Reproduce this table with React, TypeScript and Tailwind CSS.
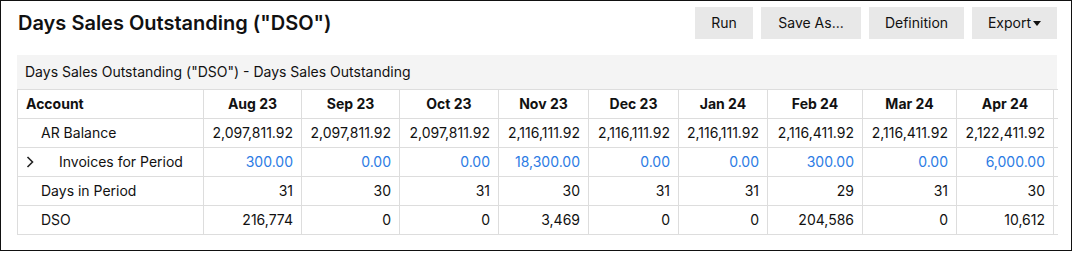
const months = ["Aug 23", "Sep 23", "Oct 23", "Nov 23", "Dec 23", "Jan 24", "Feb 24", "Mar 24", "Apr 24"];
const widths = [98, 98, 99, 90, 90, 89, 95, 94, 97];

const rows = [
  {
    name: "AR Balance",
    values: ["2,097,811.92", "2,097,811.92", "2,097,811.92", "2,116,111.92", "2,116,111.92", "2,116,111.92", "2,116,411.92", "2,116,411.92", "2,122,411.92"],
  },
  {
    name: "Invoices for Period",
    expandable: true,
    values: ["300.00", "0.00", "0.00", "18,300.00", "0.00", "0.00", "300.00", "0.00", "6,000.00"],
  },
  {
    name: "Days in Period",
    values: ["31", "30", "31", "30", "31", "31", "29", "31", "30"],
  },
  {
    name: "DSO",
    values: ["216,774", "0", "0", "3,469", "0", "0", "204,586", "0", "10,612"],
  },
];

const App = () => {
  return (
    <div
      className="w-[1072px] h-[251px] border border-[#111] bg-white text-[#111] pl-4 pt-[6px]"
      style={{ fontFamily: "Inter, 'Noto Sans', sans-serif" }}
    >
      <div className="flex w-[1040px] items-start justify-between">
        <h1 className="pt-[1px] pl-[1px] text-[20px] leading-[30px] font-semibold">Days Sales Outstanding ("DSO")</h1>
        <div className="flex gap-2">
          <button className="h-8 w-[58px] bg-[#e8e8e8] text-sm">Run</button>
          <button className="h-8 w-[100px] bg-[#e8e8e8] text-sm">Save As...</button>
          <button className="h-8 w-[95px] bg-[#e8e8e8] text-sm">Definition</button>
          <button className="h-8 w-[85px] bg-[#e8e8e8] text-sm flex items-center justify-center">
            Export
            <svg width="8" height="5" viewBox="0 0 8 5" className="ml-[2px] mt-[1px]">
              <path d="M0 0 L8 0 L4 5 Z" fill="#111" />
            </svg>
          </button>
        </div>
      </div>

      {/* report panel */}
      <div className="mt-4 w-[1040px]">
        <div className="h-[34px] bg-[#f4f4f4] flex items-center px-2 text-sm">
          Days Sales Outstanding ("DSO") - Days Sales Outstanding
        </div>
        <table className="table-fixed border-collapse text-sm w-[1040px]">
          <colgroup>
            <col style={{ width: 186 }} />
            {widths.map((w, i) => (
              <col key={i} style={{ width: w }} />
            ))}
            <col style={{ width: 4 }} />
          </colgroup>
          <thead>
            <tr className="h-[29px]">
              <th className="border border-[#dddddd] px-2 text-left font-bold">Account</th>
              {months.map((m) => (
                <th key={m} className="border border-[#dddddd] px-2 text-center font-bold">
                  {m}
                </th>
              ))}
              <th className="border-y border-[#dddddd]"></th>
            </tr>
          </thead>
          <tbody>
            {rows.map((row) => (
              <tr key={row.name} className="h-[29px]">
                <td className="border border-[#dddddd] px-2 whitespace-nowrap">
                  {row.expandable ? (
                    <span className="flex items-center">
                      <svg width="8" height="12" viewBox="0 0 8 12" className="mr-[25px]">
                        <path d="M1.5 1 L6.5 6 L1.5 11" fill="none" stroke="#222" strokeWidth="1.6" />
                      </svg>
                      {row.name}
                    </span>
                  ) : (
                    <span className="pl-[15px]">{row.name}</span>
                  )}
                </td>
                {row.values.map((v, i) => (
                  <td
                    key={i}
                    className={
                      "border border-[#dddddd] pl-1 pr-2 text-right whitespace-nowrap " +
                      (row.expandable ? "text-[#2b7be4]" : "")
                    }
                  >
                    {v}
                  </td>
                ))}
                <td className="border-y border-[#dddddd]"></td>
              </tr>
            ))}
          </tbody>
        </table>
      </div>
    </div>
  );
};

export default App;
